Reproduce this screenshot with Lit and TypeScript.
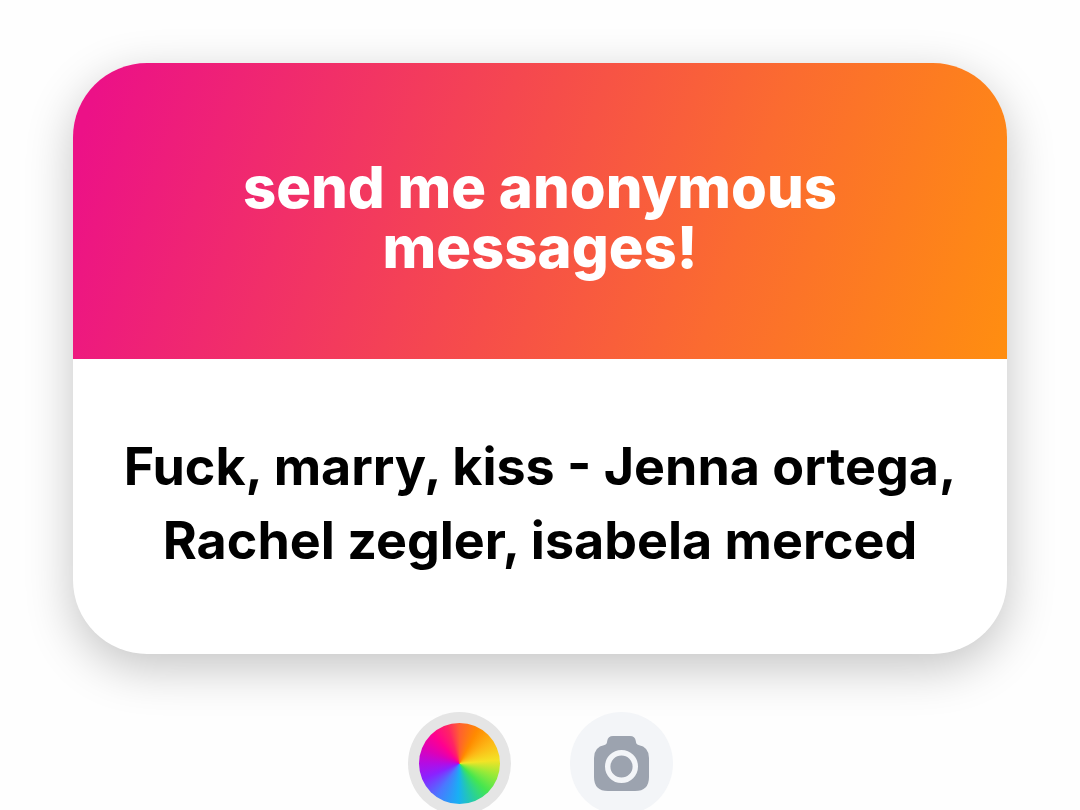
import { LitElement, html, css } from "lit";
import { customElement, property } from "lit/decorators.js";

@customElement("message-card")
class MessageCard extends LitElement {
  @property() prompt = "";
  @property() message = "";

  static styles = css`
    :host {
      display: block;
    }
    .card {
      border-radius: 74px;
      background: #fff;
      box-shadow: 0 14px 48px rgba(0, 0, 0, 0.23);
    }
    .prompt,
    .message {
      margin: 0;
      text-align: center;
    }
    .prompt {
      padding: 94px 140px 82px;
      border-radius: 74px 74px 0 0;
      background: linear-gradient(108deg, #ec1187 3%, #f64d4a 48%, #fb6b30 70%, #ff8e10 100%);
      color: #fff;
      font-size: 58px;
      line-height: 60px;
      font-weight: 850;
    }
    .message {
      padding: 71px 40px 76px;
      color: #000;
      font-size: 52px;
      line-height: 74px;
      font-weight: 650;
    }
  `;

  render() {
    return html`
      <article class="card">
        <h1 class="prompt">${this.prompt}</h1>
        <p class="message">${this.message}</p>
      </article>
    `;
  }
}

@customElement("app-root")
class AppRoot extends LitElement {
  static styles = css`
    :host {
      display: block;
      box-sizing: border-box;
      height: 100vh;
      overflow: hidden;
      padding: 63px 73px 0;
      background: #fefefe;
      font-family: Inter, "Liberation Sans", sans-serif;
    }
    .tools {
      display: flex;
      justify-content: center;
      gap: 59px;
      padding-top: 58px;
    }
    .tool {
      display: grid;
      place-items: center;
      width: 103px;
      height: 103px;
      padding: 0;
      border: 0;
      border-radius: 50%;
      background: #f3f5f8;
      cursor: pointer;
    }
    .tool.selected {
      background: #e5e5e5;
    }
    .wheel {
      width: 81px;
      height: 81px;
      border-radius: 50%;
      background: conic-gradient(
        #ff6030 0deg,
        #ff8a00 28deg,
        #fdb515 55deg,
        #f3e326 85deg,
        #9aea38 108deg,
        #45e650 135deg,
        #28d09a 157deg,
        #18b0f4 182deg,
        #4a78ff 215deg,
        #8a22ff 247deg,
        #b30ce4 270deg,
        #dd00b8 293deg,
        #ff0090 318deg,
        #ff2464 342deg,
        #ff6030 360deg
      );
    }
    .camera {
      display: block;
      width: 55px;
      height: 55px;
    }
  `;

  render() {
    return html`
      <main>
        <message-card
          prompt="send me anonymous messages!"
          message="Fuck, marry, kiss - Jenna ortega, Rachel zegler, isabela merced"
        ></message-card>
        <div class="tools">
          <button class="tool selected" type="button" aria-label="Change colour">
            <span class="wheel"></span>
          </button>
          <button class="tool" type="button" aria-label="Camera">
            <svg class="camera" viewBox="0 0 55 55" aria-hidden="true">
              <path
                fill="#9ca3af"
                d="M19 0H36Q41 0 41.800 5Q42 8.500 44.500 9Q55 11 55 22V41Q55 55 41 55H14Q0 55 0 41V22Q0 11 10.500 9Q13 8.500 13.200 5Q14 0 19 0Z"
              />
              <circle cx="27.500" cy="30.500" r="13.800" fill="none" stroke="#f3f5f8" stroke-width="5.400" />
            </svg>
          </button>
        </div>
      </main>
    `;
  }
}
